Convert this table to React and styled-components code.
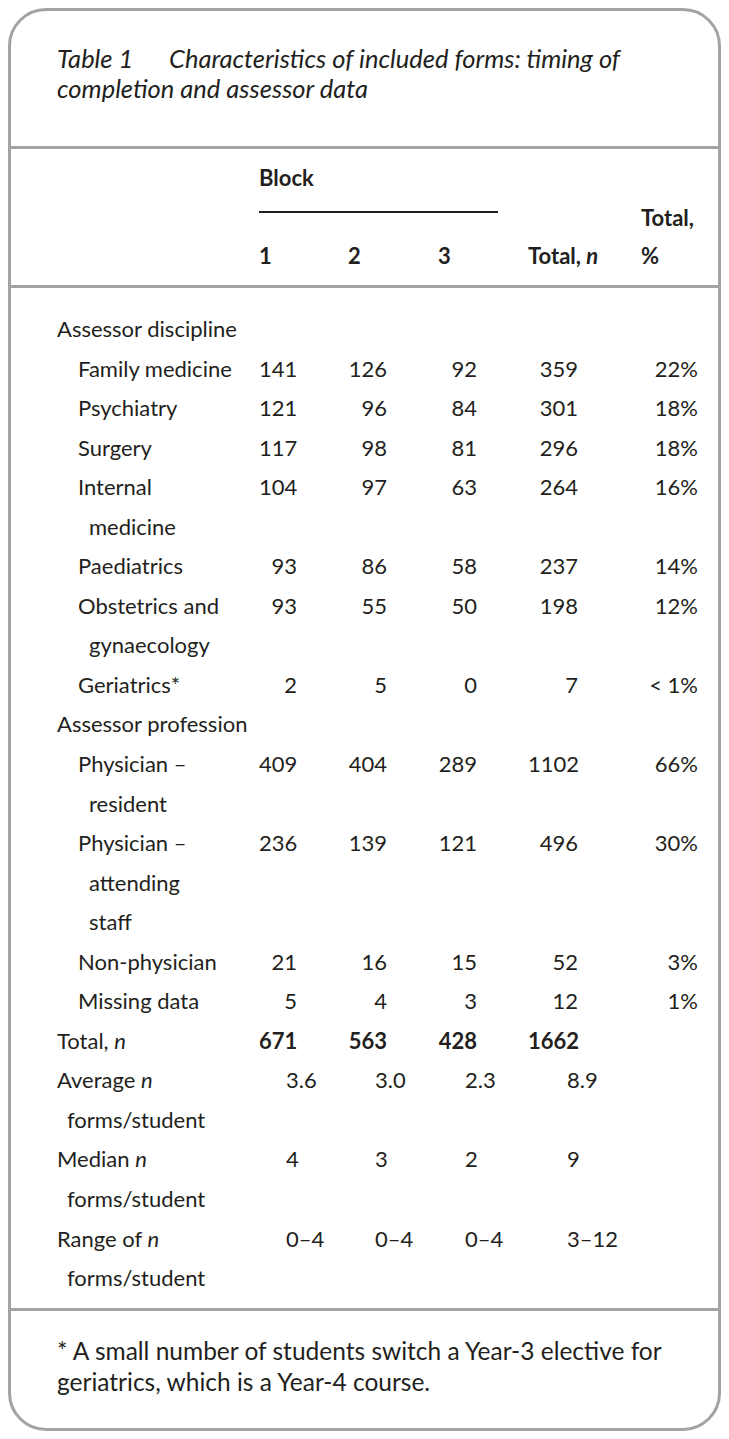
import React from "react";
import styled, { createGlobalStyle } from "styled-components";

const Global = createGlobalStyle`
  html, body { margin: 0; padding: 0; background: #ffffff; }
  body { font-family: Lato, "Liberation Sans", sans-serif; color: #231f20; }
`;

const Page = styled.div`
  padding: 8px;
`;

const Card = styled.div`
  border: 3px solid #a3a3a3;
  border-radius: 38px;
  overflow: hidden;
  background: #fff;
`;

const Caption = styled.div`
  padding: 32px 10px 43px 46px;
  border-bottom: 3px solid #a3a3a3;
  font-style: italic;
  font-size: 25.5px;
  line-height: 30px;
  white-space: nowrap;
`;

const CaptionLabel = styled.span`
  display: inline-block;
  width: 112px;
`;

const Section = styled.div`
  padding: ${(p) => p.$pad};
  border-bottom: ${(p) => (p.$rule ? "3px solid #a3a3a3" : "none")};
`;

const Grid = styled.div`
  display: grid;
  grid-template-columns: 202px 89px 90px 90px 113px 57px;
  font-size: 22px;
  line-height: 39.55px;
`;

const HeadBlock = styled.div`
  grid-column: 2 / 5;
  grid-row: 1;
  margin-right: 30px;
  font-weight: 700;
  line-height: 40px;
  padding-bottom: 13px;
  border-bottom: 2px solid #231f20;
`;

const HeadCell = styled.div`
  grid-row: 2;
  grid-column: ${(p) => p.$col};
  margin-top: 23px;
  font-weight: 700;
  line-height: 40px;
`;

const HeadPct = styled.div`
  grid-row: 1 / 3;
  grid-column: 6;
  align-self: end;
  font-weight: 700;
  line-height: 38px;
  padding-bottom: 1px;
`;

const GroupLabel = styled.div`
  grid-column: 1 / -1;
`;

const Label = styled.div`
  grid-column: 1;
  padding-left: ${(p) => p.$pl}px;
  text-indent: ${(p) => -p.$hang}px;
  white-space: nowrap;
`;

const Num = styled.div`
  text-align: ${(p) => p.$align};
  padding-right: ${(p) => (p.$align === "right" ? p.$inset : 0)}px;
  padding-left: ${(p) => (p.$align === "left" ? p.$inset : 0)}px;
  font-weight: ${(p) => (p.$bold ? 700 : 400)};
  white-space: nowrap;
`;

const Footnote = styled.div`
  padding: 24px 10px 31px 46px;
  font-size: 24.5px;
  line-height: 31px;
  white-space: nowrap;
`;

const rightInsets = [51, 51, 51, 63, 0];
const leftInsets = [27, 27, 27, 39, 0];

const discipline = [
  [["Family medicine"], ["141", "126", "92", "359", "22%"]],
  [["Psychiatry"], ["121", "96", "84", "301", "18%"]],
  [["Surgery"], ["117", "98", "81", "296", "18%"]],
  [["Internal", "medicine"], ["104", "97", "63", "264", "16%"]],
  [["Paediatrics"], ["93", "86", "58", "237", "14%"]],
  [["Obstetrics and", "gynaecology"], ["93", "55", "50", "198", "12%"]],
  [["Geriatrics*"], ["2", "5", "0", "7", "< 1%"]],
];

const profession = [
  [["Physician –", "resident"], ["409", "404", "289", "1102", "66%"]],
  [["Physician –", "attending", "staff"], ["236", "139", "121", "496", "30%"]],
  [["Non-physician"], ["21", "16", "15", "52", "3%"]],
  [["Missing data"], ["5", "4", "3", "12", "1%"]],
];

const stats = [
  [["Average ", "forms/student"], ["3.6", "3.0", "2.3", "8.9"]],
  [["Median ", "forms/student"], ["4", "3", "2", "9"]],
  [["Range of ", "forms/student"], ["0–4", "0–4", "0–4", "3–12"]],
];

function Lines({ lines, italicN }) {
  return lines.map((l, i) => (
    <React.Fragment key={i}>
      {i > 0 && <br />}
      {l}
      {i === 0 && italicN && <i>n</i>}
    </React.Fragment>
  ));
}

function SubRow({ label, values }) {
  return (
    <>
      <Label $pl={32} $hang={11}>
        <Lines lines={label} />
      </Label>
      {values.map((v, i) => (
        <Num key={i} $align="right" $inset={rightInsets[i]}>
          {v}
        </Num>
      ))}
    </>
  );
}

export default function App() {
  return (
    <Page>
      <Global />
      <Card>
        <Caption>
          <CaptionLabel>Table 1</CaptionLabel>Characteristics of included forms: timing of
          <br />
          completion and assessor data
        </Caption>

        <Section $pad="9px 20px 9px 46px" $rule>
          <Grid>
            <HeadBlock>Block</HeadBlock>
            <HeadCell $col={2}>1</HeadCell>
            <HeadCell $col={3}>2</HeadCell>
            <HeadCell $col={4}>3</HeadCell>
            <HeadCell $col={5}>
              Total, <i>n</i>
            </HeadCell>
            <HeadPct>
              Total,
              <br />%
            </HeadPct>
          </Grid>
        </Section>

        <Section $pad="21px 20px 10px 46px" $rule>
          <Grid>
            <GroupLabel>Assessor discipline</GroupLabel>
            {discipline.map(([l, v], i) => (
              <SubRow key={"d" + i} label={l} values={v} />
            ))}
            <GroupLabel>Assessor profession</GroupLabel>
            {profession.map(([l, v], i) => (
              <SubRow key={"p" + i} label={l} values={v} />
            ))}
            <Label $pl={0} $hang={0}>
              Total, <i>n</i>
            </Label>
            {["671", "563", "428", "1662"].map((v, i) => (
              <Num key={i} $align="right" $inset={rightInsets[i]} $bold>
                {v}
              </Num>
            ))}
            <Num $align="right" $inset={0} />
            {stats.map(([l, v], r) => (
              <React.Fragment key={"s" + r}>
                <Label $pl={10} $hang={10}>
                  <Lines lines={l} italicN />
                </Label>
                {v.map((x, i) => (
                  <Num key={i} $align="left" $inset={leftInsets[i]}>
                    {x}
                  </Num>
                ))}
                <Num $align="left" $inset={0} />
              </React.Fragment>
            ))}
          </Grid>
        </Section>

        <Footnote>
          * A small number of students switch a Year-3 elective for
          <br />
          geriatrics, which is a Year-4 course.
        </Footnote>
      </Card>
    </Page>
  );
}
